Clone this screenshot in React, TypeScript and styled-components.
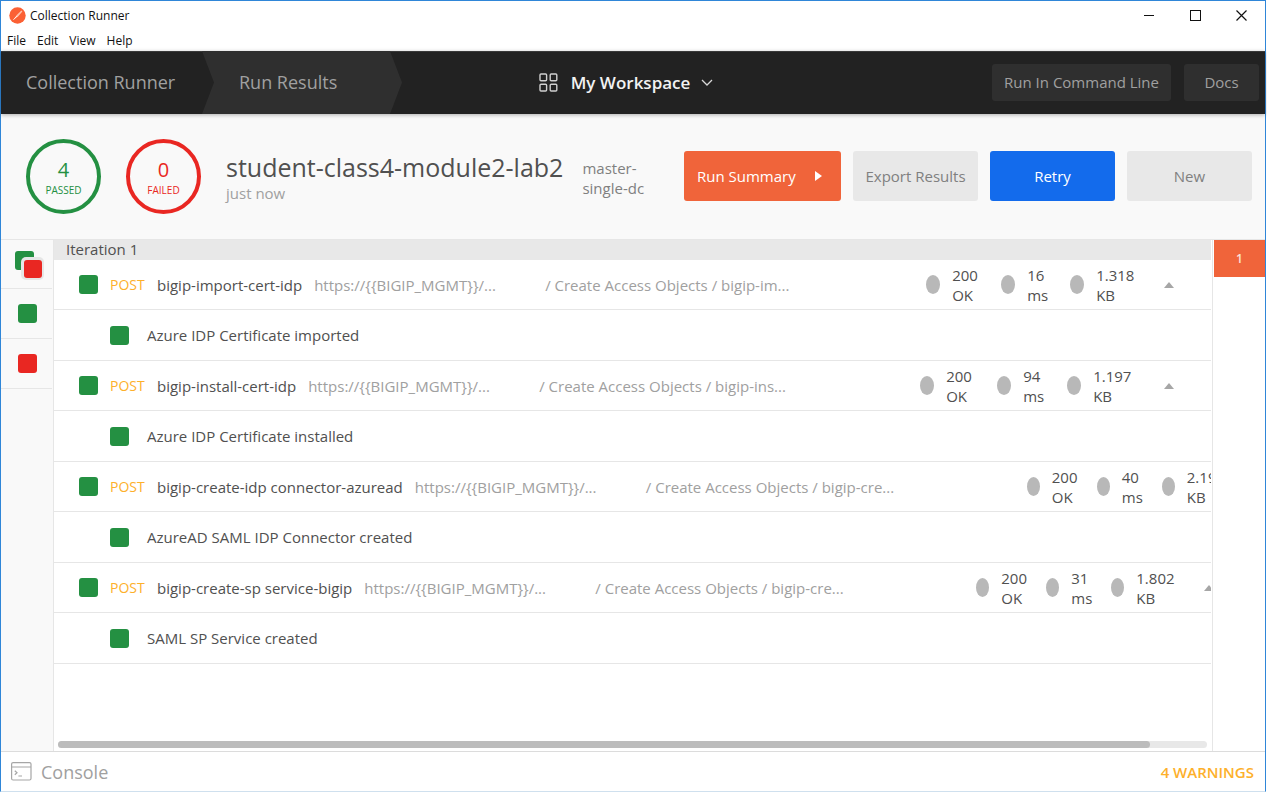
import React from "react";
import styled, { createGlobalStyle, css } from "styled-components";

const GREEN = "#249042";
const RED = "#e92722";
const ORANGE = "#f0643a";
const LINE = "#e6e6e6";

const GlobalStyle = createGlobalStyle`
  *, *::before, *::after { box-sizing: border-box; }
  body {
    margin: 0;
    background: #fff;
    font-family: "Open Sans", "Noto Sans", sans-serif;
    font-size: 15px;
    line-height: 20px;
    color: #505050;
  }
  button { font: inherit; border: 0; padding: 0; margin: 0; background: none; color: inherit; cursor: pointer; }
  h1, p { margin: 0; font-weight: 400; }
`;

const Screen = styled.div`
  min-height: 100vh;
  display: flex;
  padding-right: 1px;
`;

const Window = styled.div`
  flex: 1;
  min-width: 0;
  display: flex;
  flex-direction: column;
  border: 1px solid #2f86d8;
  border-bottom-color: #cfe0ee;
  background: #fff;
`;

const TitleBar = styled.header`
  display: flex;
  align-items: center;
  height: 30px;
  padding: 0 1px 1px 8px;
  gap: 4px;
  color: #111;
  font-size: 12px;
`;

const WindowTitle = styled.span`
  flex: 1;
  line-height: 16px;
`;

const WindowButton = styled.button`
  width: 46px;
  height: 29px;
  display: flex;
  align-items: center;
  justify-content: center;
`;

const WindowButtons = styled.div`
  display: flex;
`;

const MenuBar = styled.nav`
  display: flex;
  align-items: center;
  gap: 11px;
  height: 20px;
  padding-left: 6px;
  color: #111;
  font-size: 12px;
  line-height: 16px;
`;

const Header = styled.div`
  position: relative;
  z-index: 1;
  display: flex;
  align-items: stretch;
  height: 63px;
  background: #222;
  box-shadow: inset 0 1px 0 #393939, 0 1px 4px rgba(0, 0, 0, 0.3);
`;

const HeaderSide = styled.div<{ $end?: boolean }>`
  flex: 1;
  display: flex;
  align-items: ${(p) => (p.$end ? "center" : "stretch")};
  justify-content: ${(p) => (p.$end ? "flex-end" : "flex-start")};
  gap: ${(p) => (p.$end ? "13px" : "0")};
  padding-right: ${(p) => (p.$end ? "6px" : "0")};
`;

const Crumb = styled.button<{ $active?: boolean }>`
  width: 201px;
  padding: 0 0 1px 25px;
  text-align: left;
  font-size: 18px;
  line-height: 24px;
  color: #a0a0a0;
  ${(p) =>
    p.$active &&
    css`
      width: 200px;
      padding-left: 37px;
      background: #2f2f2f;
      clip-path: polygon(0 0, 188px 0, 100% 50%, 188px 100%, 0 100%, 12px 50%);
    `}
`;

const Workspace = styled.button`
  display: flex;
  align-items: center;
  margin-right: 8px;
  font-size: 17px;
  line-height: 24px;
  font-weight: 600;
  color: #f2f2f2;
  svg:first-child { margin-right: 13px; }
  svg:last-child { margin-left: 11px; }
`;

const HeaderButton = styled.button`
  height: 37px;
  padding: 0 12px 1px;
  min-width: 75px;
  border-radius: 3px;
  background: #2f2f2f;
  color: #a0a0a0;
`;

const Summary = styled.section`
  display: flex;
  align-items: center;
  height: 126px;
  padding: 0 13px 0 25px;
  background: #f9f9f9;
  border-bottom: 1px solid ${LINE};
`;

const Counter = styled.div<{ $color: string }>`
  flex: none;
  width: 75px;
  height: 75px;
  margin-right: 25px;
  padding-top: 2px;
  border: 4px solid ${(p) => p.$color};
  border-radius: 50%;
  color: ${(p) => p.$color};
  display: flex;
  flex-direction: column;
  align-items: center;
  justify-content: center;
  text-align: center;
`;

const CounterValue = styled.span`
  font-size: 20px;
  line-height: 24px;
`;

const CounterLabel = styled.span`
  font-size: 10px;
  line-height: 16px;
`;

const RunInfo = styled.div`
  flex: none;
`;

const RunName = styled.h1`
  font-size: 25px;
  line-height: 32px;
`;

const RunTime = styled.p`
  color: #a0a0a0;
`;

const Environment = styled.p`
  flex: 1;
  min-width: 0;
  max-width: 100px;
  padding: 2px 8px 0 19px;
  color: #808080;
`;

const Actions = styled.div`
  flex: none;
  display: flex;
  gap: 12px;
  margin-left: auto;
  padding-bottom: 2px;
`;

const kinds = {
  primary: css`background: ${ORANGE}; color: #fff;`,
  info: css`background: #136bec; color: #fff;`,
  plain: css`background: #e8e8e8; color: #808080;`,
};

const ActionButton = styled.button<{ $kind: keyof typeof kinds; $wide?: boolean }>`
  display: flex;
  align-items: center;
  justify-content: ${(p) => (p.$wide ? "space-between" : "center")};
  width: ${(p) => (p.$wide ? "157px" : "125px")};
  padding: ${(p) => (p.$wide ? "0 19px 0 13px" : "0")};
  height: 50px;
  border-radius: 3px;
  ${(p) => kinds[p.$kind]}
`;

const Body = styled.div`
  flex: 1;
  display: flex;
  min-height: 0;
`;

const Filters = styled.aside`
  flex: none;
  width: 53px;
  background: #f9f9f9;
  border-right: 1px solid ${LINE};
`;

const FilterButton = styled.button`
  display: flex;
  align-items: center;
  justify-content: center;
  width: 51px;
  height: 50px;
  padding-left: 2px;
  border-bottom: 1px solid ${LINE};
  &:first-child { height: 49px; }
`;

const Square = styled.span<{ $color: string }>`
  flex: none;
  width: 19px;
  height: 19px;
  border-radius: 3px;
  background: ${(p) => p.$color};
`;

const Results = styled.main`
  flex: 1;
  min-width: 0;
  display: flex;
  flex-direction: column;
  overflow: hidden;
  padding-right: 1px;
`;

const IterationTitle = styled.div`
  height: 20px;
  padding-left: 12px;
  background: #e8e8e8;
  line-height: 18px;
`;

const RequestRow = styled.div`
  display: flex;
  align-items: center;
  height: 50px;
  padding-left: 25px;
  border-bottom: 1px solid ${LINE};
  overflow: hidden;
  white-space: nowrap;
`;

const Method = styled.span`
  flex: none;
  width: 35px;
  margin: 0 12px;
  font-size: 14px;
  color: #fdb02b;
`;

const RequestName = styled.span`
  flex: none;
  margin-right: 12px;
`;

const RequestUrl = styled.span`
  flex: none;
  width: 231px;
  color: #a0a0a0;
`;

const RequestPath = styled.span`
  flex: none;
  width: 381px;
  color: #a0a0a0;
`;

const Stat = styled.span<{ $width: number; $dot: number }>`
  flex: none;
  display: flex;
  align-items: center;
  gap: 12px;
  width: ${(p) => p.$width}px;
  &::before {
    content: "";
    flex: none;
    width: ${(p) => p.$dot}px;
    height: 19px;
    border-radius: 50%;
    background: #b8b8b8;
  }
`;

const StatText = styled.span`
  width: min-content;
  white-space: normal;
`;

const Toggle = styled.button`
  flex: none;
  width: 10px;
  height: 20px;
  display: flex;
  align-items: center;
`;

const TestRow = styled.div`
  display: flex;
  align-items: center;
  gap: 18px;
  height: 51px;
  padding-left: 56px;
  border-bottom: 1px solid ${LINE};
`;

const ScrollTrack = styled.div`
  margin: auto 4px 3px;
  height: 7px;
  border-radius: 4px;
  background: #e8e8e8;
`;

const ScrollThumb = styled.div`
  width: 95%;
  height: 7px;
  border-radius: 4px;
  background: #bcbcbc;
`;

const Iterations = styled.aside`
  flex: none;
  width: 53px;
  padding-left: 1px;
  border-left: 1px solid ${LINE};
`;

const IterationButton = styled.button`
  display: block;
  width: 100%;
  height: 37px;
  background: ${ORANGE};
  color: #fbe0d8;
  font-size: 12px;
  font-weight: 600;
`;

const Footer = styled.footer`
  display: flex;
  align-items: center;
  justify-content: space-between;
  height: 40px;
  padding: 0 11px 0 10px;
  border-top: 1px solid #dcdcdc;
`;

const ConsoleButton = styled.button`
  display: flex;
  align-items: center;
  gap: 9px;
  font-size: 18px;
  line-height: 24px;
  color: #a0a0a0;
`;

const Warnings = styled.button`
  font-weight: 600;
  color: #fdb02b;
`;

type Request = {
  name: string;
  path: string;
  time: string;
  size: string;
  test: string;
  dot: number;
  widths: [number, number, number];
};

const requests: Request[] = [
  { name: "bigip-import-cert-idp", path: "/ Create Access Objects / bigip-im...", time: "16 ms", size: "1.318 KB", test: "Azure IDP Certificate imported", dot: 14, widths: [75, 69, 94] },
  { name: "bigip-install-cert-idp", path: "/ Create Access Objects / bigip-ins...", time: "94 ms", size: "1.197 KB", test: "Azure IDP Certificate installed", dot: 14, widths: [77, 70, 97] },
  { name: "bigip-create-idp connector-azuread", path: "/ Create Access Objects / bigip-cre...", time: "40 ms", size: "2.197 KB", test: "AzureAD SAML IDP Connector created", dot: 13, widths: [70, 65, 93] },
  { name: "bigip-create-sp service-bigip", path: "/ Create Access Objects / bigip-cre...", time: "31 ms", size: "1.802 KB", test: "SAML SP Service created", dot: 13, widths: [70, 65, 93] },
];

const Logo = () => (
  <svg width="17" height="17" viewBox="0 0 17 17" aria-hidden="true">
    <circle cx="8.5" cy="8.5" r="8.2" fill="#fb6034" />
    <path d="M12.4 3.4 L13.4 4.6 L9.2 9.2 L4.4 12.8 L7.8 8 Z" fill="#ffc4ae" />
    <path d="M7.8 9.2 L4.4 12.8" stroke="#fff" strokeWidth="0.8" />
  </svg>
);

const GridIcon = () => (
  <svg width="19" height="19" viewBox="0 0 19 19" fill="none" stroke="#d0d0d0" strokeWidth="1.4" aria-hidden="true">
    <rect x="1" y="1" width="6.6" height="6.8" rx="1" />
    <rect x="11.2" y="1" width="6.6" height="6.8" rx="1" />
    <rect x="1" y="11.2" width="6.6" height="6.8" rx="1" />
    <rect x="11.2" y="11.2" width="6.6" height="6.8" rx="1" />
  </svg>
);

const MixedIcon = () => (
  <svg width="33" height="33" viewBox="0 0 33 33" aria-hidden="true">
    <rect x="4" y="3" width="19" height="19" rx="3" fill={GREEN} />
    <rect x="10" y="9" width="23" height="23" rx="5" fill="#e6e6e6" />
    <rect x="13" y="12" width="18" height="18" rx="3" fill={RED} />
  </svg>
);

export default function App() {
  return (
    <>
      <GlobalStyle />
      <Screen>
        <Window>
          <TitleBar>
            <Logo />
            <WindowTitle>Collection Runner</WindowTitle>
            <WindowButtons>
              <WindowButton aria-label="Minimize">
                <svg width="11" height="11" stroke="#111" fill="none"><path d="M0 5.5H10" /></svg>
              </WindowButton>
              <WindowButton aria-label="Maximize">
                <svg width="11" height="11" stroke="#111" fill="none"><rect x="0.5" y="0.5" width="10" height="10" /></svg>
              </WindowButton>
              <WindowButton aria-label="Close">
                <svg width="11" height="11" stroke="#111" strokeWidth="1.2" fill="none"><path d="M0.5 0.5L10.5 10.5M10.5 0.5L0.5 10.5" /></svg>
              </WindowButton>
            </WindowButtons>
          </TitleBar>
          <MenuBar>
            <button>File</button>
            <button>Edit</button>
            <button>View</button>
            <button>Help</button>
          </MenuBar>
          <Header>
            <HeaderSide>
              <Crumb>Collection Runner</Crumb>
              <Crumb $active>Run Results</Crumb>
            </HeaderSide>
            <Workspace>
              <GridIcon />
              My Workspace
              <svg width="12" height="8" viewBox="0 0 12 8" fill="none" stroke="#d8d8d8" strokeWidth="1.3" aria-hidden="true">
                <path d="M1 1L6 6L11 1" />
              </svg>
            </Workspace>
            <HeaderSide $end>
              <HeaderButton>Run In Command Line</HeaderButton>
              <HeaderButton>Docs</HeaderButton>
            </HeaderSide>
          </Header>
          <Summary>
            <Counter $color={GREEN}>
              <CounterValue>4</CounterValue>
              <CounterLabel>PASSED</CounterLabel>
            </Counter>
            <Counter $color={RED}>
              <CounterValue>0</CounterValue>
              <CounterLabel>FAILED</CounterLabel>
            </Counter>
            <RunInfo>
              <RunName>student-class4-module2-lab2</RunName>
              <RunTime>just now</RunTime>
            </RunInfo>
            <Environment>master-single-dc</Environment>
            <Actions>
              <ActionButton $kind="primary" $wide>
                Run Summary
                <svg width="8" height="10" aria-hidden="true"><path d="M1 0L8 5L1 10Z" fill="#fff" /></svg>
              </ActionButton>
              <ActionButton $kind="plain">Export Results</ActionButton>
              <ActionButton $kind="info">Retry</ActionButton>
              <ActionButton $kind="plain">New</ActionButton>
            </Actions>
          </Summary>
          <Body>
            <Filters>
              <FilterButton aria-label="All results"><MixedIcon /></FilterButton>
              <FilterButton aria-label="Passed"><Square $color={GREEN} /></FilterButton>
              <FilterButton aria-label="Failed"><Square $color={RED} /></FilterButton>
            </Filters>
            <Results>
              <IterationTitle>Iteration 1</IterationTitle>
              {requests.map((r) => (
                <React.Fragment key={r.name}>
                  <RequestRow>
                    <Square $color={GREEN} />
                    <Method>POST</Method>
                    <RequestName>{r.name}</RequestName>
                    <RequestUrl>{"https://{{BIGIP_MGMT}}/..."}</RequestUrl>
                    <RequestPath>{r.path}</RequestPath>
                    <Stat $dot={r.dot} $width={r.widths[0]}><StatText>200 OK</StatText></Stat>
                    <Stat $dot={r.dot} $width={r.widths[1]}><StatText>{r.time}</StatText></Stat>
                    <Stat $dot={r.dot} $width={r.widths[2]}><StatText>{r.size}</StatText></Stat>
                    <Toggle aria-label="Collapse">
                      <svg width="10" height="6" aria-hidden="true"><path d="M0 6L5 0L10 6Z" fill="#a6a6a6" /></svg>
                    </Toggle>
                  </RequestRow>
                  <TestRow>
                    <Square $color={GREEN} />
                    {r.test}
                  </TestRow>
                </React.Fragment>
              ))}
              <ScrollTrack><ScrollThumb /></ScrollTrack>
            </Results>
            <Iterations>
              <IterationButton>1</IterationButton>
            </Iterations>
          </Body>
          <Footer>
            <ConsoleButton>
              <svg width="21" height="19" viewBox="0 0 21 19" fill="none" stroke="#a6a6a6" strokeWidth="1.2" aria-hidden="true">
                <rect x="0.6" y="0.6" width="19.4" height="17.4" rx="1.5" />
                <path d="M0.6 5H20M3.8 8.8L6 10.8L3.8 12.8M7.4 14H11" />
              </svg>
              Console
            </ConsoleButton>
            <Warnings>4 WARNINGS</Warnings>
          </Footer>
        </Window>
      </Screen>
    </>
  );
}
